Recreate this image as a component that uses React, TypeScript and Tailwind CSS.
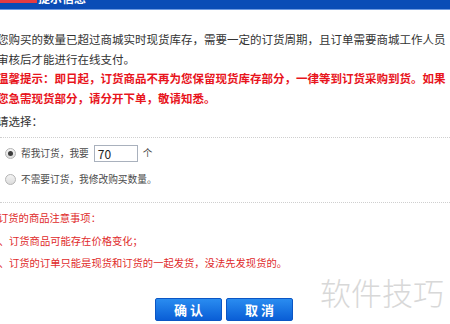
import type { ReactNode } from "react";

const cjk = { fontFamily: '"Noto Sans CJK SC", "Noto Sans", sans-serif' };

function Radio({ checked, children }: { checked?: boolean; children: ReactNode }) {
  return (
    <label className="flex items-center gap-[5px]">
      <span className="flex h-[11px] w-[11px] items-center justify-center rounded-full border border-[#b4b4b4] bg-gradient-to-b from-[#f4f4f4] to-[#dcdcdc]">
        {checked && <span className="h-[5px] w-[5px] rounded-full bg-[#3c3c3c]" />}
      </span>
      {children}
    </label>
  );
}

function Button({ label }: { label: string }) {
  return (
    <button
      type="button"
      className="h-[23px] w-[67px] rounded-[2px] border border-[#0b56c4] bg-gradient-to-b from-[#2a8cf0] to-[#0a5ed6] text-[13px] font-bold leading-none text-white"
    >
      {label}
    </button>
  );
}

export default function App() {
  return (
    <div className="relative h-[324px] w-[450px] overflow-hidden bg-white text-[11.5px] text-[#333]" style={cjk}>
      {/* Title bar, only the bottom edge shows */}
      <div className="relative h-[10px] overflow-hidden border-b border-[#6f9ae0] bg-[#0a4cb6]">
        <div className="absolute left-0 top-0 h-[3px] w-[37px] bg-[#e43b42]" />
        <span className="absolute left-[38px] top-[-10px] text-[12px] font-bold leading-[16px] text-white">提示信息</span>
      </div>

      <div className="-ml-[3px] mt-[19px]">
        <p className="whitespace-nowrap leading-[20px]">
          您购买的数量已超过商城实时现货库存，需要一定的订货周期，且订单需要商城工作人员
          <br />
          审核后才能进行在线支付。
        </p>
        <p className="whitespace-nowrap font-bold leading-[19.5px] text-[#e8141c]">
          温馨提示：即日起，订货商品不再为您保留现货库存部分，一律等到订货采购到货。如果
          <br />
          您急需现货部分，请分开下单，敬请知悉。
        </p>
        <p className="mt-[3px] leading-[20px]">请选择：</p>
      </div>

      <div className="mt-[6px] border-t border-dotted border-[#cfcfcf]" />

      <div className="flex flex-col gap-[10px] pl-[5px] pt-[7px] text-[9.7px] leading-[15px] text-[#4a4a4a]">
        <Radio checked>
          <span>帮我订货，我要</span>
          <span className="flex h-[17px] w-[44px] items-center border border-[#a9b1bd] pl-[3px] text-[12px] text-[#222]">70</span>
          <span>个</span>
        </Radio>
        <Radio>
          <span>不需要订货，我修改购买数量。</span>
        </Radio>
      </div>

      <div className="mt-[15px] border-t border-dotted border-[#cfcfcf]" />

      <div className="mt-[4px] whitespace-nowrap text-[10.3px] leading-[22.5px] text-[#e02a2a]">
        <p className="-ml-[2px]">订货的商品注意事项：</p>
        <p className="-ml-[7px]">1、订货商品可能存在价格变化；</p>
        <p className="-ml-[7px]">2、订货的订单只能是现货和订货的一起发货，没法先发现货的。</p>
      </div>

      <div className="mt-[23px] flex justify-center gap-[4px] pr-[2px]">
        <Button label="确 认" />
        <Button label="取 消" />
      </div>

      {/* watermark */}
      <span className="absolute left-[320px] top-[276px] text-[31px] font-light leading-none text-[#d8d8d8]">软件技巧</span>
    </div>
  );
}
